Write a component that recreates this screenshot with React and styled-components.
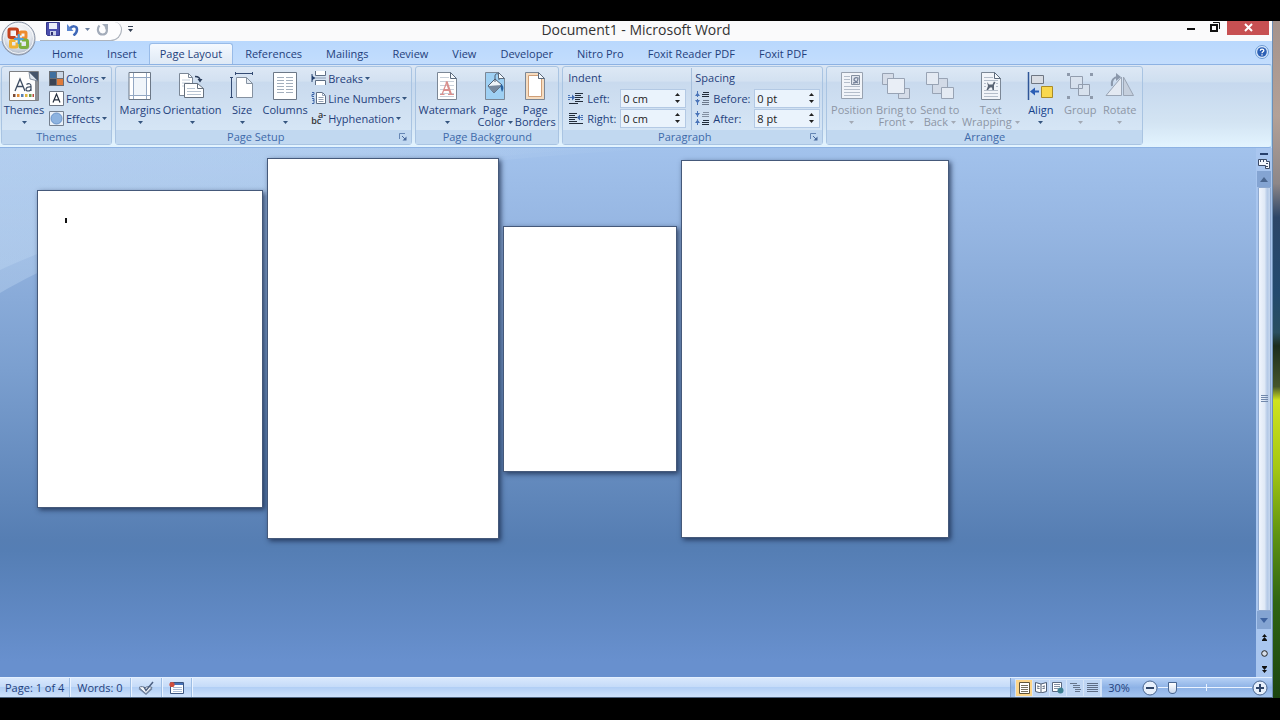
import React, { useState } from "react";
import styled, { createGlobalStyle } from "styled-components";

const GlobalStyle = createGlobalStyle`
  * {
    box-sizing: border-box;
  }

  body {
    margin: 0;
    background: #000;
    font-family: "Open Sans", "Noto Sans", sans-serif;
    font-size: 11px;
    color: #1f3f7c;
  }

  button,
  input {
    font: inherit;
    color: inherit;
    margin: 0;
    padding: 0;
    border: 0;
    background: none;
  }

  svg {
    display: block;
    flex: none;
  }
`;

const Screen = styled.div`
  display: flex;
  min-height: 100vh;
  padding: 21px 0 22px;
  background: #000;
`;

const Window = styled.div`
  position: relative;
  flex: 1;
  min-width: 0;
  display: flex;
  flex-direction: column;
  border-right: 1px solid #6e8fb5;
  border-bottom: 1px solid #4f6580;
  background: #bfdbff;
`;

const Wallpaper = styled.div`
  width: 7px;
  background: linear-gradient(
    #a5938c 0%,
    #b3a197 14%,
    #8e8788 24%,
    #2d4668 29%,
    #234a6e 40%,
    #2a4f60 46%,
    #1b2c1c 48%,
    #46562a 54%,
    #cfe21f 56%,
    #a5c713 66%,
    #5f9312 76%,
    #2f6412 86%,
    #1c4510 100%
  );
`;

// Title bar
//============
const TitleBar = styled.header`
  display: grid;
  grid-template-columns: 1fr auto 1fr;
  height: 20px;
  background: #fafafb;
`;

const QuickAccess = styled.div`
  display: flex;
  align-items: center;
  padding-left: 40px;
`;

const QuickPill = styled.div`
  display: flex;
  align-items: center;
  gap: 6px;
  width: 82px;
  height: 19px;
  padding: 0 0 4px 6px;
  border: 1px solid #aeb4bd;
  border-top: 0;
  border-left: 0;
  border-radius: 0 8px 12px 0;
  background: #fdfdfe;
`;

const IconButton = styled.button`
  display: flex;
  align-items: center;
  justify-content: center;
  cursor: pointer;
`;

const MoreButton = styled(IconButton)`
  height: 16px;
  margin: 0 0 5px 6px;
`;

const Title = styled.h1`
  margin: 0;
  font-size: 14px;
  font-weight: 400;
  line-height: 18px;
  color: #333;
`;

const WindowButtons = styled.div`
  display: flex;
  justify-content: flex-end;
  align-items: flex-start;
  padding-right: 3px;
`;

const WindowButton = styled(IconButton)`
  width: ${({ $close }) => ($close ? "42px" : "24px")};
  height: 14px;
  background: ${({ $close }) => ($close ? "#c75052" : "transparent")};
`;

const OfficeButton = styled(IconButton)`
  position: absolute;
  top: 0;
  left: 1px;
`;

// Tabs
//============
const TabBar = styled.nav`
  display: flex;
  height: 23px;
  padding: 2px 3px 0 40px;
  background: linear-gradient(#b9d8fd, #c3ddfd);
`;

const Tab = styled.button`
  padding: 0 ${({ $active }) => ($active ? "10px" : "11px")};
  line-height: 20px;
  white-space: nowrap;
  cursor: pointer;
  border: 1px solid ${({ $active }) => ($active ? "#98bbe8" : "transparent")};
  border-width: 1px 1px 0;
  border-radius: 3px 3px 0 0;
  background: ${({ $active }) =>
    $active ? "linear-gradient(#f4f9ff, #dfe9f5)" : "transparent"};
`;

const HelpButton = styled(IconButton)`
  margin-left: auto;
  height: 18px;
`;

// Ribbon
//============
const Ribbon = styled.section`
  display: flex;
  gap: 3px;
  height: 84px;
  padding: 1px 0 2px 1px;
  border: 1px solid #8db2e3;
  border-left: 0;
  border-right-color: #a8d4f4;
  border-radius: 0 3px 3px 0;
  background: linear-gradient(
    #dbe6f4 0%,
    #cfdff0 20%,
    #c6d8ee 22%,
    #d3e4f3 70%,
    #e3f4ff 100%
  );
`;

const GroupBox = styled.div`
  display: flex;
  flex-direction: column;
  border: 1px solid #a9c4e2;
  border-radius: 3px;
  background: linear-gradient(
    #dde8f5 0%,
    #d3e1f1 18%,
    #c9daee 20%,
    #d5e5f5 80%
  );
`;

const GroupBody = styled.div`
  flex: 1;
  display: flex;
  padding: 1px 2px 0;
`;

const GroupFooter = styled.div`
  display: grid;
  grid-template-columns: ${({ $launcher }) => ($launcher ? "1fr 16px" : "1fr")};
  align-items: center;
  height: 14px;
  line-height: 14px;
  text-align: center;
  color: #3e6aaa;
  background: #c1d8f0;
`;

const BigBox = styled.button`
  display: flex;
  flex-direction: column;
  align-items: center;
  width: ${({ $width }) => $width}px;
  padding-top: 2px;
  line-height: 12px;
  white-space: nowrap;
  cursor: pointer;
  color: ${({ $bold }) => ($bold ? "#15428b" : "inherit")};

  &:disabled {
    color: #8d96a5;
    cursor: default;
  }
`;

const BigIcon = styled.span`
  display: flex;
  align-items: center;
  justify-content: center;
  height: 32px;
  margin-bottom: 2px;
`;

const LabelLine = styled.span`
  display: flex;
  align-items: center;
  justify-content: center;
  gap: 3px;
  min-height: 12px;
`;

const SmallColumn = styled.div`
  display: flex;
  flex-direction: column;
  padding-left: ${({ $indent }) => $indent || 0}px;
`;

const SmallButton = styled.button`
  display: flex;
  align-items: center;
  gap: 2px;
  height: 20px;
  padding-right: 2px;
  white-space: nowrap;
  cursor: pointer;
`;

const FieldColumn = styled.div`
  width: ${({ $width }) => $width}px;
  padding: 1px 5px 0 3px;

  & + & {
    padding: 1px 0 0 3px;
    border-left: 1px solid #a7bfdc;
  }
`;

const FieldTitle = styled.div`
  height: 19px;
  line-height: 18px;
`;

const Field = styled.div`
  display: flex;
  align-items: center;
  height: 20px;
`;

const FieldLabel = styled.label`
  flex: 1;
  padding-left: 3px;
`;

const Spinner = styled.div`
  display: flex;
  width: 66px;
  height: 19px;
  border: 1px solid #b3c9e4;
  background: #eaf3fc;
`;

const SpinnerInput = styled.input`
  flex: 1;
  width: 0;
  padding-left: 2px;
  color: #222;
`;

const SpinnerArrows = styled.div`
  display: flex;
  flex-direction: column;
  justify-content: center;
  gap: 4px;
  width: 16px;
`;

// Document area
//============
const Workspace = styled.main`
  position: relative;
  flex: 1;
  display: flex;
  min-height: 529px;
  background: linear-gradient(
    #a2c2ec 0%,
    #96b6e2 15%,
    #7b9fcf 42%,
    #567eb3 74%,
    #557eb4 76%,
    #6890ce 97%
  );
`;

const Swoosh = styled.svg`
  position: absolute;
  top: 0;
  left: 0;
`;

const Pages = styled.div`
  position: relative;
  flex: 1;
  display: flex;
  align-items: center;
  align-self: flex-start;
  gap: 4px;
  padding: 10px 0 0 37px;
`;

const Page = styled.article`
  width: ${({ $width }) => $width}px;
  height: ${({ $height }) => $height}px;
  padding: 27px;
  border: 1px solid #45597a;
  background: #fff;
  box-shadow: 2px 2px 5px rgba(20, 35, 65, 0.75);
`;

const Caret = styled.div`
  width: 2px;
  height: 5px;
  background: #111;
`;

const ScrollColumn = styled.div`
  position: relative;
  display: flex;
  flex-direction: column;
  align-items: center;
  width: 16px;
  padding-top: 3px;
  background: #a9c6ef;
`;

const ScrollButton = styled(IconButton)`
  width: 14px;
  height: ${({ $height }) => $height || 16}px;
  background: ${({ $dark }) => ($dark ? "#84a4d2" : "transparent")};
`;

const Thumb = styled.div`
  flex: 1;
  display: flex;
  align-items: center;
  justify-content: center;
  width: 13px;
  border: 1px solid #8fa9cf;
  border-radius: 1px;
  background: linear-gradient(90deg, #f0f5fc, #e0e9f6 50%, #b4c9e6 75%, #c6d7ee);
`;

// Status bar
//============
const StatusBar = styled.footer`
  display: flex;
  height: 20px;
  border-top: 1px solid #e4f0ff;
  background: linear-gradient(#d9e8fc, #c6dcf9 45%, #b2cff5 50%, #cfe2fb);
`;

const StatusItem = styled.button`
  display: flex;
  align-items: center;
  padding: 0 ${({ $pad }) => $pad || 7}px;
  border-right: 1px solid #9dbde4;
  box-shadow: 1px 0 #eaf3ff;
`;

const StatusRight = styled.div`
  display: flex;
  align-items: center;
  margin-left: auto;
  padding: 0 4px;
  border-left: 1px solid #7f9fca;
  background: linear-gradient(#b5d0f5, #8db2e6 50%, #a4c4ef);
`;

const ViewButtons = styled.div`
  display: flex;
  border: 1px solid #d3e3f8;
  background: #bed5f4;
`;

const ViewButton = styled(IconButton)`
  width: 17px;
  height: 16px;
  border-right: 1px solid #d6e5f9;
  background: ${({ $active }) => ($active ? "#fcd58a" : "transparent")};
`;

const ZoomLevel = styled.button`
  width: 40px;
  padding-right: 6px;
  text-align: center;
  line-height: 18px;
`;

const ZoomSlider = styled.input`
  width: 94px;
  height: 16px;
  appearance: none;
  background:
    linear-gradient(#eaf3ff, #eaf3ff) 48px 50% / 1px 7px no-repeat,
    linear-gradient(#eaf3ff, #eaf3ff) 0 50% / 100% 1px no-repeat;

  &::-webkit-slider-thumb {
    appearance: none;
    width: 9px;
    height: 12px;
    border: 1px solid #48658f;
    border-radius: 1px 1px 5px 5px;
    background: linear-gradient(#fff, #c9d8ee);
  }
`;

/* Small glyphs */
const Arrow = ({ up, color = "#35557f", size = 5 }) => (
  <svg width={size} height={Math.ceil(size * 0.6)} viewBox="0 0 5 3">
    <path d={up ? "M0 3h5L2.500 0z" : "M0 0h5L2.500 3z"} fill={color} />
  </svg>
);

const Launcher = () => (
  <svg width="8" height="8" viewBox="0 0 8 8" fill="none">
    <path d="M.5 6V.5H6" stroke="#6586b4" />
    <path d="M3 3l3 3" stroke="#48699c" />
    <path d="M7.500 3.500v4h-4z" fill="#48699c" />
  </svg>
);

const OfficeLogo = () => (
  <svg width="35" height="35" viewBox="0 0 35 35">
    <defs>
      <radialGradient id="orb" cx=".5" cy=".35" r=".65">
        <stop offset="0" stopColor="#fff" />
        <stop offset=".6" stopColor="#e3e7ee" />
        <stop offset="1" stopColor="#a9b4c5" />
      </radialGradient>
    </defs>
    <circle cx="17.500" cy="17.500" r="16.500" fill="url(#orb)" stroke="#8993a5" />
    <circle cx="17.500" cy="17.500" r="15" fill="none" stroke="#fff" opacity=".8" />
    <g fill="none" strokeWidth="3">
      <rect x="8" y="8" width="8.500" height="8.500" rx="1.500" stroke="#c4421d" />
      <rect x="19" y="11" width="6" height="6" rx="1" stroke="#ee8b2d" />
      <rect x="9.500" y="19.500" width="6.500" height="6.500" rx="1" stroke="#f2b233" />
      <rect x="19" y="19" width="7.500" height="7.500" rx="1.500" stroke="#7db03f" />
    </g>
    <path d="M13 18h9.500M17.700 13v10" stroke="#4aa0dc" strokeWidth="2" />
    <path d="M14.500 14.500h2v2h-2zM19 19.500h2v2h-2zM19 14.500h2v2h-2zM14.500 19.500h2v2h-2z" fill="#e5f3ff" />
  </svg>
);

const SaveIcon = () => (
  <svg width="14" height="14" viewBox="0 0 14 14">
    <path d="M.5.500h13v13H1.500l-1-1z" fill="#4b4fae" stroke="#35388c" />
    <path d="M3 1h8v6H3z" fill="#e9edf9" />
    <path d="M4 9h6v4.500H4z" fill="#c9d0ea" />
    <path d="M5 10h2v3H5z" fill="#2f3172" />
  </svg>
);

const UndoIcon = () => (
  <svg width="13" height="13" viewBox="0 0 13 13" fill="none">
    <path d="M4 5.500c2-3 7-3 7 1 0 2.500-1.500 4.500-3.500 6" stroke="#3f68b8" strokeWidth="2.500" />
    <path d="M1 1v7h6.500z" fill="#5b86d0" />
  </svg>
);

const RedoIcon = () => (
  <svg width="13" height="13" viewBox="0 0 13 13" fill="none">
    <path d="M3.500 2.500C.5 6 2 11.500 6.500 11.500S12 7 9.500 4" stroke="#a3acba" strokeWidth="2.200" />
    <path d="M6 1h6v6z" fill="#a3acba" />
  </svg>
);

const MoreIcon = () => (
  <svg width="5" height="6" viewBox="0 0 5 6">
    <path d="M0 0h5v1H0zM0 3h5L2.500 6z" fill="#333f52" />
  </svg>
);

const HelpIcon = () => (
  <svg width="14" height="14" viewBox="0 0 14 14" fill="none">
    <circle cx="7" cy="7" r="6.500" fill="#dcebfc" stroke="#6d9bd3" />
    <circle cx="7" cy="7" r="4.800" fill="#2b5fb4" />
    <path d="M5.300 5.800c0-2.300 3.500-2.200 3.500-.2C8.800 6.900 7 6.800 7 8.300M7 9.300v1.200" stroke="#fff" strokeWidth="1.300" />
  </svg>
);

/* Ribbon icons */
const ThemesIcon = () => (
  <svg width="30" height="30" viewBox="0 0 30 30" fill="none">
    <path d="M.5.500h29v29H.5z" fill="#fdfdfd" stroke="#7d7f83" />
    <path d="M27.500 1v28" stroke="#8c8f94" strokeWidth="3" />
    <path d="M20 1h9v9z" fill="#46556b" />
    <path d="M20 1l1 7 8 2z" fill="#dfe6ef" stroke="#5c6b80" strokeWidth=".7" />
    <path d="M6 20l5-12 5 12M8 15.500h6" stroke="#3f4e63" strokeWidth="1.300" />
    <path d="M17.500 13.500c2-1.500 4.500-1 4.500 1.500v5M22 16c-6-.5-6 4-3 4 1.500 0 3-1 3-2.500" stroke="#3f4e63" strokeWidth="1.200" />
    <path d="M4 23h2.500v3H4z" fill="#7a4a35" />
    <path d="M8 23h2.500v3H8z" fill="#e08b35" />
    <path d="M12 23h2.500v3H12z" fill="#557fb5" />
    <path d="M16 23h2.500v3H16z" fill="#e0b43b" />
    <path d="M20 23h2.500v3H20z" fill="#6b9a4c" />
    <path d="M23.500 23h1.500v3h-1.500z" fill="#b94a3b" />
  </svg>
);

const ColorsIcon = () => (
  <svg width="15" height="15" viewBox="0 0 15 15">
    <path d="M0 0h15v15H0z" fill="#6b6f76" />
    <path d="M1 1h6v6H1z" fill="#3f6f9f" />
    <path d="M8 1h6v6H8z" fill="#c9d6e6" />
    <path d="M1 8h6v6H1z" fill="#3c4454" />
    <path d="M8 8h6v6H8z" fill="#e07b3b" />
  </svg>
);

const FontsIcon = () => (
  <svg width="15" height="15" viewBox="0 0 15 15" fill="none">
    <path d="M.5.500h14v14H.5z" fill="#fff" stroke="#6d7685" />
    <path d="M4 11.500l3.500-8.500 3.500 8.500M5.300 8.800h4.400" stroke="#222c3c" strokeWidth="1.200" />
  </svg>
);

const EffectsIcon = () => (
  <svg width="15" height="15" viewBox="0 0 15 15">
    <path d="M.5.500h14v14H.5z" fill="#e9f0f8" stroke="#75808f" />
    <circle cx="7.500" cy="7.500" r="5.500" fill="#8db3e0" stroke="#6a93c8" />
  </svg>
);

const MarginsIcon = () => (
  <svg width="24" height="28" viewBox="0 0 24 28" fill="none">
    <path d="M1 .5h21.500v27H1z" fill="#fff" stroke="#6c7887" />
    <path d="M6 6h12v17H6z" fill="#f0f5fa" />
    <path d="M5.500 1v26M18.500 1v26M1 5.500h21M1 23.500h21" stroke="#93a7c2" />
  </svg>
);

const OrientationIcon = () => (
  <svg width="28" height="28" viewBox="0 0 28 28" fill="none">
    <path d="M1.500 1.500h9l4 4v18h-13z" fill="#fff" stroke="#7b8796" />
    <path d="M10.500 1.500v4h4" stroke="#7b8796" />
    <path d="M4 8h8M4 11h8M4 14h5" stroke="#c3cedb" />
    <path d="M6.500 11.500h13l6 5v9h-19z" fill="#fff" stroke="#66717f" />
    <path d="M19.500 11.500v5h6" stroke="#66717f" />
    <path d="M9 16.500h8M9 19.500h14M9 22.500h14" stroke="#b7c3d1" />
    <path d="M17 4.500c4 0 5 2 5 4" stroke="#2c3e5c" strokeWidth="1.500" />
    <path d="M19.500 7h5L22 10.500z" fill="#2c3e5c" />
  </svg>
);

const SizeIcon = () => (
  <svg width="24" height="28" viewBox="0 0 24 28" fill="none">
    <path d="M6.500 5.500h10l6 6v14h-16z" fill="#fff" stroke="#8591a0" />
    <path d="M16.500 5.500v6h6z" fill="#e4ebf3" stroke="#8591a0" />
    <path d="M5 1.500h18M5.500 0v3M22.500 0v3M1.500 5v21M0 5.500h3M0 25.500h3" stroke="#344b73" />
  </svg>
);

const ColumnsIcon = () => (
  <svg width="24" height="28" viewBox="0 0 24 28" fill="none">
    <path d="M.5.500h23v27H.5z" fill="#fff" stroke="#6c7887" />
    <path
      d="M4 5.500h7M13 5.500h7M4 8.500h7M13 8.500h7M4 11.500h7M13 11.500h7M4 14.500h7M13 14.500h7M4 17.500h7M13 17.500h7M4 20.500h7M13 20.500h7"
      stroke="#a3afbd"
    />
  </svg>
);

const BreaksIcon = () => (
  <svg width="15" height="14" viewBox="0 0 15 14" fill="none">
    <path d="M4.500 0v4.500h10V0M4.500 14V9.500h10V14" fill="#fff" stroke="#5f6f85" />
    <path d="M4 7h11" stroke="#8b9ab0" />
    <path d="M1 3v8M1 7h3" stroke="#24406e" />
    <path d="M1 4.500v5L4 7z" fill="#24406e" />
  </svg>
);

const LineNumbersIcon = () => (
  <svg width="15" height="14" viewBox="0 0 15 14" fill="none">
    <path d="M5.500 1.500h6l3 3v8h-9z" fill="#fff" stroke="#5f6f85" />
    <path d="M11.500 1.500v3h3M7.500 6.500h5M7.500 8.500h5M7.500 10.500h5" stroke="#93a1b5" />
    <path d="M1 1.500h2v2H1v2h2M1 7.500h2v2H1.500M3 9.500v3H1" stroke="#3f66a8" />
  </svg>
);

const HyphenBox = styled.span`
  display: flex;
  flex-direction: column;
  align-items: flex-start;
  width: 15px;
  font-size: 9px;
  font-weight: 600;
  line-height: 6px;
  color: #333;

  & > :first-child {
    align-self: flex-end;
  }
`;

const HyphenIcon = () => (
  <HyphenBox aria-hidden="true">
    <span>a-</span>
    <span>bc</span>
  </HyphenBox>
);

const Sheet = ({ fill = "#fff", children }) => (
  <svg width="24" height="28" viewBox="0 0 24 28" fill="none">
    <path d="M2.500.500h13l6 6v21h-19z" fill={fill} stroke="#7b8796" />
    {children}
    <path d="M15.500.500v6h6z" fill="#f5f9fd" stroke="#5d6b7d" />
  </svg>
);

const WatermarkIcon = () => (
  <Sheet>
    <path d="M5 5.500h9M5 9.500h14M5 13.500h14M5 17.500h14M5 21.500h14M5 24.500h14" stroke="#c8d0da" />
    <path d="M7 22.500l5-13" stroke="#d98f8d" strokeWidth="1.200" />
    <path d="M11.500 9.500l4.500 13M9 18h6" stroke="#d98f8d" strokeWidth="2.200" />
    <path d="M5 22.500h4.500M13 22.500h6" stroke="#d98f8d" />
  </Sheet>
);

const PageColorIcon = () => (
  <Sheet fill="#9fd0f3">
    <path d="M5 14l7-7 7 6-8 8z" fill="#eef3f8" stroke="#4e5c70" />
    <path d="M5 14l14-1-8 8z" fill="#77889d" />
    <path d="M12 10V4c0-3 4-3 4 0v4" stroke="#4e5c70" />
    <path d="M18 12c3 2 3 5 1 8-1-3-2-5-1-8z" fill="#27609f" />
  </Sheet>
);

const PageBordersIcon = () => (
  <Sheet fill="#f6dcc0">
    <path d="M5.500 3.500h10v3h3v18h-13z" fill="#fff" stroke="#cf9f78" />
  </Sheet>
);

const IndentIcon = ({ right }) => (
  <svg width="16" height="13" viewBox="0 0 16 13" fill="none">
    {right ? (
      <>
        <path d="M1 1.500h8M1 3.500h6M1 5.500h8M1 7.500h6M1 9.500h8M1 11.500h14" stroke="#222c3a" />
        <path d="M10 5.500h5M13 3.500h2M13 7.500h2" stroke="#4a74b8" />
        <path d="M9 5.500l3-3v6z" fill="#3c66ab" />
      </>
    ) : (
      <>
        <path d="M7 1.500h8M7 3.500h6M7 5.500h8M7 7.500h5M7 9.500h8M1 11.500h9" stroke="#222c3a" />
        <path d="M0 5.500h4M0 3.500h2M0 7.500h2" stroke="#4a74b8" />
        <path d="M7 5.500l-3-3v6z" fill="#3c66ab" />
      </>
    )}
  </svg>
);

const SpacingIcon = ({ after }) => (
  <svg width="15" height="14" viewBox="0 0 15 14" fill="none">
    <path d="M8 1.500h6M7 3.500h7M7 5.500h7" stroke={after ? "#8390a2" : "#222c3a"} />
    <path d="M8 9.500h6M7 11.500h7M7 13.500h7" stroke={after ? "#222c3a" : "#6b788b"} />
    <path
      d={after ? "M0 2h5L2.500 5.500zM0 12h5L2.500 8.500z" : "M0 5h5L2.500 1.500zM0 9h5L2.500 12.500z"}
      fill="#4a74b8"
    />
    <path d="M2.500 0v6M2.500 8v6" stroke="#4a74b8" />
  </svg>
);

const PositionIcon = () => (
  <svg width="24" height="28" viewBox="0 0 24 28" fill="none">
    <path d="M1.500.500h21v26h-21z" fill="#f1f4f9" stroke="#98a2b0" />
    <path d="M4 4.500h6M4 7.500h6M4 10.500h6M4 14.500h16M4 17.500h16M4 20.500h16M4 23.500h16" stroke="#b4bdca" />
    <path d="M11.500 3.500h8v9h-8z" fill="#dfe4ec" stroke="#8590a0" />
    <path d="M13 11c3 0 5-2 5-5-2-1-4 0-4 2 1 1 2 2 4 3" stroke="#77839a" strokeWidth="1.300" />
  </svg>
);

const BringFrontIcon = () => (
  <svg width="30" height="28" viewBox="0 0 30 28">
    <g fill="#d5dce8" stroke="#98a3b4">
      <path d="M1.500 1.500h11v11h-11zM17.500 16.500h11v10h-11z" />
      <path d="M6.500 6.500h17v15h-17z" fill="#e9eef6" />
    </g>
  </svg>
);

const SendBackIcon = () => (
  <svg width="30" height="28" viewBox="0 0 30 28">
    <g fill="#e4eaf3" stroke="#98a3b4">
      <path d="M7.500 6.500h15v15h-15z" fill="#d2dae7" />
      <path d="M1.500.500h12v12h-12zM16.500 15.500h12v11h-12z" />
    </g>
  </svg>
);

const TextWrapIcon = () => (
  <Sheet fill="#f1f4f9">
    <path d="M5 5.500h9M5 8.500h14M5 11.500h2M17 11.500h2M5 14.500h2M17 14.500h2M5 18.500h14M5 21.500h14M5 24.500h14" stroke="#b4bdca" />
    <path d="M8 10l2 2.500h3.500L15 9.500l1.500 1-1.500 2.500v5h-1.500l-.5-2.500h-2L9 18H7.500L9 14z" fill="#5b6575" />
  </Sheet>
);

const AlignIcon = () => (
  <svg width="27" height="28" viewBox="0 0 27 28" fill="none">
    <path d="M1.500 0v28" stroke="#2f5597" strokeWidth="1.500" />
    <path d="M4.500 3.500h12v8h-12z" fill="#d9dde4" stroke="#6e7683" />
    <path d="M14.500 14.500h11v11h-11z" fill="#f9d84e" stroke="#a98b28" />
    <path d="M5 19.500h7" stroke="#2a5db5" strokeWidth="2" />
    <path d="M3 19.500l5-4v8z" fill="#2a5db5" />
  </svg>
);

const GroupIcon = () => (
  <svg width="28" height="28" viewBox="0 0 28 28" fill="none">
    <path d="M4.500 4.500h12v12h-12zM12.500 12.500h11v11h-11z" fill="#dbe2ed" fillOpacity=".7" stroke="#929dae" />
    <path d="M1 1h3v3H1zM24 1h3v3h-3zM1 24h3v3H1zM24 24h3v3h-3z" fill="#8e9aac" />
  </svg>
);

const RotateIcon = () => (
  <svg width="30" height="28" viewBox="0 0 30 28" fill="none">
    <path d="M16.500 5v18.500H1z" fill="#e3e9f2" stroke="#9aa5b5" />
    <path d="M18.500 5v18.500h10z" fill="#c5cfdd" stroke="#9aa5b5" />
    <path d="M7 14C6 8 9 5 13 5" stroke="#8b98ab" strokeWidth="2" />
    <path d="M11 1l5 4-5 4z" fill="#8b98ab" />
  </svg>
);

/* Status bar icons */
const ProofIcon = () => (
  <svg width="16" height="14" viewBox="0 0 16 14" fill="none">
    <path d="M1 6.500c2-1.500 5-1 6 .500 1-1.500 4-2 7-.5L8 13z" fill="#f4f7fb" stroke="#60718c" />
    <path d="M1 7.500L8 13l6-5.500" stroke="#7284a0" strokeWidth="1.500" />
    <path d="M6 6l2 3.500L15 1" stroke="#4c5f80" strokeWidth="1.500" />
  </svg>
);

const MacroIcon = () => (
  <svg width="15" height="13" viewBox="0 0 15 13" fill="none">
    <path d="M1.500 1.500h13v11h-13z" fill="#fff" stroke="#3c557f" />
    <path d="M2 3h12" stroke="#4772b8" strokeWidth="2" />
    <path d="M4 6.500h9M4 8.500h9M4 10.500h9" stroke="#a9bbd6" />
    <circle cx="3" cy="3.500" r="2.600" fill="#cf4e3e" />
  </svg>
);

const PrintViewIcon = () => (
  <svg width="11" height="12" viewBox="0 0 11 12" fill="none">
    <path d="M.5.500h10v11H.5z" fill="#fff" stroke="#5e5238" />
    <path d="M2 3.500h7M2 5.500h7M2 7.500h7M2 9.500h7" stroke="#77705f" />
  </svg>
);

const ReadViewIcon = () => (
  <svg width="12" height="11" viewBox="0 0 12 11" fill="none">
    <path d="M6 2L.5.500v9L6 11l5.500-1.500v-9z" fill="#fff" stroke="#4e5c73" />
    <path d="M6 2v9M2 4l2.500.500M2 6l2.500.500M7.500 4.500L10 4M7.500 6.500L10 6" stroke="#4e5c73" />
  </svg>
);

const WebViewIcon = () => (
  <svg width="12" height="12" viewBox="0 0 12 12" fill="none">
    <path d="M.5.500h9v9h-9z" fill="#fff" stroke="#5a6880" />
    <path d="M2 2.500h6M2 4.500h6M2 6.500h4" stroke="#8390a5" />
    <circle cx="8.500" cy="8.500" r="3" fill="#3d7f92" />
  </svg>
);

const OutlineViewIcon = () => (
  <svg width="11" height="11" viewBox="0 0 11 11" fill="none">
    <path d="M0 1.500h7M3 3.500h7M3 5.500h7M5 7.500h6M5 9.500h5" stroke="#65748c" />
  </svg>
);

const DraftViewIcon = () => (
  <svg width="11" height="11" viewBox="0 0 11 11" fill="none">
    <path d="M0 1.500h11M0 3.500h11M0 5.500h11M0 7.500h11M0 9.500h11" stroke="#5e6d86" />
  </svg>
);

const ZoomIcon = ({ plus }) => (
  <svg width="16" height="16" viewBox="0 0 16 16" fill="none">
    <circle cx="8" cy="8" r="7" fill="#e6effb" stroke="#48658f" />
    <path d={plus ? "M4 8h8M8 4v8" : "M4 8h8"} stroke="#2f4568" strokeWidth="2" />
  </svg>
);

/* Ribbon parts */
const Group = ({ title, launcher, children }) => (
  <GroupBox>
    <GroupBody>{children}</GroupBody>
    <GroupFooter $launcher={launcher}>
      {title}
      {launcher && (
        <IconButton aria-label={`${title} options`}>
          <Launcher />
        </IconButton>
      )}
    </GroupFooter>
  </GroupBox>
);

const Big = ({ icon, label, second, arrow = true, ...rest }) => {
  const tone = rest.disabled ? "#a3aab5" : undefined;
  return (
    <BigBox {...rest}>
      <BigIcon>{icon}</BigIcon>
      <LabelLine>{label}</LabelLine>
      <LabelLine>
        {second}
        {arrow && <Arrow color={tone} />}
      </LabelLine>
    </BigBox>
  );
};

const Small = ({ icon, children }) => (
  <SmallButton>
    {icon}
    {children}
    <Arrow />
  </SmallButton>
);

const SpinField = ({ icon, id, label, unit, start }) => {
  const [value, setValue] = useState(start);
  return (
    <Field>
      {icon}
      <FieldLabel htmlFor={id}>{label}</FieldLabel>
      <Spinner>
        <SpinnerInput id={id} value={`${value} ${unit}`} readOnly />
        <SpinnerArrows>
          <IconButton aria-label="Increase" onClick={() => setValue(value + 1)}>
            <Arrow up color="#222" />
          </IconButton>
          <IconButton aria-label="Decrease" onClick={() => setValue(value - 1)}>
            <Arrow color="#222" />
          </IconButton>
        </SpinnerArrows>
      </Spinner>
    </Field>
  );
};

const tabs = [
  "Home",
  "Insert",
  "Page Layout",
  "References",
  "Mailings",
  "Review",
  "View",
  "Developer",
  "Nitro Pro",
  "Foxit Reader PDF",
  "Foxit PDF",
];

const pages = [
  { width: 226, height: 318 },
  { width: 232, height: 381 },
  { width: 174, height: 246 },
  { width: 268, height: 378 },
];

const views = [
  { name: "Print Layout", icon: <PrintViewIcon /> },
  { name: "Full Screen Reading", icon: <ReadViewIcon /> },
  { name: "Web Layout", icon: <WebViewIcon /> },
  { name: "Outline", icon: <OutlineViewIcon /> },
  { name: "Draft", icon: <DraftViewIcon /> },
];

function App() {
  const [tab, setTab] = useState("Page Layout");
  const [view, setView] = useState("Print Layout");
  const [zoom, setZoom] = useState(30);

  return (
    <>
      <GlobalStyle />
      <Screen>
        <Window>
          <TitleBar>
            <QuickAccess>
              <QuickPill>
                <IconButton aria-label="Save">
                  <SaveIcon />
                </IconButton>
                <IconButton aria-label="Undo">
                  <UndoIcon />
                </IconButton>
                <IconButton aria-label="Undo list">
                  <Arrow color="#6b7f9e" />
                </IconButton>
                <IconButton aria-label="Repeat">
                  <RedoIcon />
                </IconButton>
              </QuickPill>
              <MoreButton aria-label="Customize Quick Access Toolbar">
                <MoreIcon />
              </MoreButton>
            </QuickAccess>
            <Title>Document1 - Microsoft Word</Title>
            <WindowButtons>
              <WindowButton aria-label="Minimize">
                <svg width="8" height="12" viewBox="0 0 8 12">
                  <path d="M0 6h8v2H0z" fill="#111" />
                </svg>
              </WindowButton>
              <WindowButton aria-label="Restore">
                <svg width="10" height="12" viewBox="0 0 10 12" fill="none">
                  <path d="M1 3h6v6H1z" stroke="#111" strokeWidth="2" />
                  <path d="M3 .5h6.500V7" stroke="#111" />
                </svg>
              </WindowButton>
              <WindowButton $close aria-label="Close">
                <svg width="9" height="12" viewBox="0 0 9 12">
                  <path d="M1 2l7 7M8 2L1 9" stroke="#fff" strokeWidth="2" />
                </svg>
              </WindowButton>
            </WindowButtons>
          </TitleBar>

          <TabBar>
            {tabs.map((name) => (
              <Tab key={name} $active={name === tab} onClick={() => setTab(name)}>
                {name}
              </Tab>
            ))}
            <HelpButton aria-label="Help">
              <HelpIcon />
            </HelpButton>
          </TabBar>
          <OfficeButton aria-label="Office Button">
            <OfficeLogo />
          </OfficeButton>

          <Ribbon>
            <Group title="Themes">
              <Big icon={<ThemesIcon />} label="Themes" $width={40} />
              <SmallColumn $indent={5}>
                <Small icon={<ColorsIcon />}>Colors</Small>
                <Small icon={<FontsIcon />}>Fonts</Small>
                <Small icon={<EffectsIcon />}>Effects</Small>
              </SmallColumn>
            </Group>

            <Group title="Page Setup" launcher>
              <Big icon={<MarginsIcon />} label="Margins" $width={44} />
              <Big icon={<OrientationIcon />} label="Orientation" $width={60} />
              <Big icon={<SizeIcon />} label="Size" $width={40} />
              <Big icon={<ColumnsIcon />} label="Columns" $width={46} />
              <SmallColumn $indent={3}>
                <Small icon={<BreaksIcon />}>Breaks</Small>
                <Small icon={<LineNumbersIcon />}>Line Numbers</Small>
                <Small icon={<HyphenIcon />}>Hyphenation</Small>
              </SmallColumn>
            </Group>

            <Group title="Page Background">
              <Big icon={<WatermarkIcon />} label="Watermark" $width={58} />
              <Big icon={<PageColorIcon />} label="Page" second="Color" $width={38} />
              <Big
                icon={<PageBordersIcon />}
                label="Page"
                second="Borders"
                arrow={false}
                $width={42}
              />
            </Group>

            <Group title="Paragraph" launcher>
              <FieldColumn $width={126}>
                <FieldTitle>Indent</FieldTitle>
                <SpinField icon={<IndentIcon />} id="left" label="Left:" unit="cm" start={0} />
                <SpinField
                  icon={<IndentIcon right />}
                  id="right"
                  label="Right:"
                  unit="cm"
                  start={0}
                />
              </FieldColumn>
              <FieldColumn $width={129}>
                <FieldTitle>Spacing</FieldTitle>
                <SpinField icon={<SpacingIcon />} id="before" label="Before:" unit="pt" start={0} />
                <SpinField
                  icon={<SpacingIcon after />}
                  id="after"
                  label="After:"
                  unit="pt"
                  start={8}
                />
              </FieldColumn>
            </Group>

            <Group title="Arrange">
              <Big icon={<PositionIcon />} label="Position" $width={45} disabled />
              <Big
                icon={<BringFrontIcon />}
                label="Bring to"
                second="Front"
                $width={44}
                disabled
              />
              <Big icon={<SendBackIcon />} label="Send to" second="Back" $width={43} disabled />
              <Big icon={<TextWrapIcon />} label="Text" second="Wrapping" $width={59} disabled />
              <Big icon={<AlignIcon />} label="Align" $width={41} $bold />
              <Big icon={<GroupIcon />} label="Group" $width={38} disabled />
              <Big icon={<RotateIcon />} label="Rotate" $width={41} disabled />
            </Group>
          </Ribbon>

          <Workspace>
            <Swoosh width="680" height="240" viewBox="0 0 680 240" aria-hidden="true">
              <defs>
                <linearGradient id="glow" x1="0" y1="0" x2="1" y2="0">
                  <stop offset="0" stopColor="#bcd5f1" stopOpacity=".4" />
                  <stop offset=".5" stopColor="#bcd5f1" stopOpacity=".35" />
                  <stop offset="1" stopColor="#bcd5f1" stopOpacity="0" />
                </linearGradient>
              </defs>
              <path d="M0 0h680C460 8 240 45 150 78 90 98 40 122 0 145z" fill="url(#glow)" />
              <path d="M0 0h600C400 12 130 60 0 122z" fill="url(#glow)" />
            </Swoosh>
            <Pages>
              {pages.map((page, i) => (
                <Page key={i} $width={page.width} $height={page.height}>
                  {i === 0 && <Caret />}
                </Page>
              ))}
            </Pages>
            <ScrollColumn>
              <ScrollButton $height={5} aria-label="Split">
                <svg width="8" height="2" viewBox="0 0 8 2">
                  <path d="M0 0h8v2H0z" fill="#27406c" />
                </svg>
              </ScrollButton>
              <ScrollButton $height={15} aria-label="View Ruler">
                <svg width="12" height="11" viewBox="0 0 12 11" fill="none">
                  <path d="M.5 1.500h8v2h3v7h-4v-3h-7z" fill="#f3f7fd" stroke="#3c4b66" />
                  <path d="M2.500 2v2M5.500 2v2M8 5.500h2M8 8.500h2" stroke="#3c4b66" />
                </svg>
              </ScrollButton>
              <ScrollButton $dark aria-label="Scroll up">
                <Arrow up size={8} color="#4a668f" />
              </ScrollButton>
              <Thumb>
                <svg width="7" height="8" viewBox="0 0 7 8">
                  <path d="M0 .5h7M0 2.500h7M0 4.500h7M0 6.500h7" stroke="#7188ab" />
                </svg>
              </Thumb>
              <ScrollButton $dark $height={18} aria-label="Scroll down">
                <Arrow size={8} color="#3f63a0" />
              </ScrollButton>
              <ScrollButton aria-label="Previous Page">
                <svg width="5" height="7" viewBox="0 0 5 7">
                  <path d="M0 3h5L2.500 0zM0 6h5L2.500 3zM0 6h5v1H0z" fill="#111" />
                </svg>
              </ScrollButton>
              <ScrollButton aria-label="Select Browse Object">
                <svg width="7" height="7" viewBox="0 0 7 7">
                  <circle cx="3.500" cy="3.500" r="2.800" fill="#d5dde9" stroke="#222" />
                </svg>
              </ScrollButton>
              <ScrollButton aria-label="Next Page">
                <svg width="5" height="7" viewBox="0 0 5 7">
                  <path d="M0 0h5v1H0zM0 1h5L2.500 4zM0 4h5L2.500 7z" fill="#111" />
                </svg>
              </ScrollButton>
            </ScrollColumn>
          </Workspace>

          <StatusBar>
            <StatusItem $pad={5}>Page: 1 of 4</StatusItem>
            <StatusItem>Words: 0</StatusItem>
            <StatusItem aria-label="Proofing">
              <ProofIcon />
            </StatusItem>
            <StatusItem aria-label="Record Macro">
              <MacroIcon />
            </StatusItem>
            <StatusRight>
              <ViewButtons>
                {views.map(({ name, icon }) => (
                  <ViewButton
                    key={name}
                    aria-label={name}
                    $active={name === view}
                    onClick={() => setView(name)}
                  >
                    {icon}
                  </ViewButton>
                ))}
              </ViewButtons>
              <ZoomLevel>{zoom}%</ZoomLevel>
              <IconButton aria-label="Zoom out" onClick={() => setZoom(zoom - 10)}>
                <ZoomIcon />
              </IconButton>
              <ZoomSlider
                type="range"
                aria-label="Zoom"
                min="10"
                max="180"
                value={zoom}
                onChange={(e) => setZoom(Number(e.target.value))}
              />
              <IconButton aria-label="Zoom in" onClick={() => setZoom(zoom + 10)}>
                <ZoomIcon plus />
              </IconButton>
            </StatusRight>
          </StatusBar>
        </Window>
        <Wallpaper />
      </Screen>
    </>
  );
}

export default App;
